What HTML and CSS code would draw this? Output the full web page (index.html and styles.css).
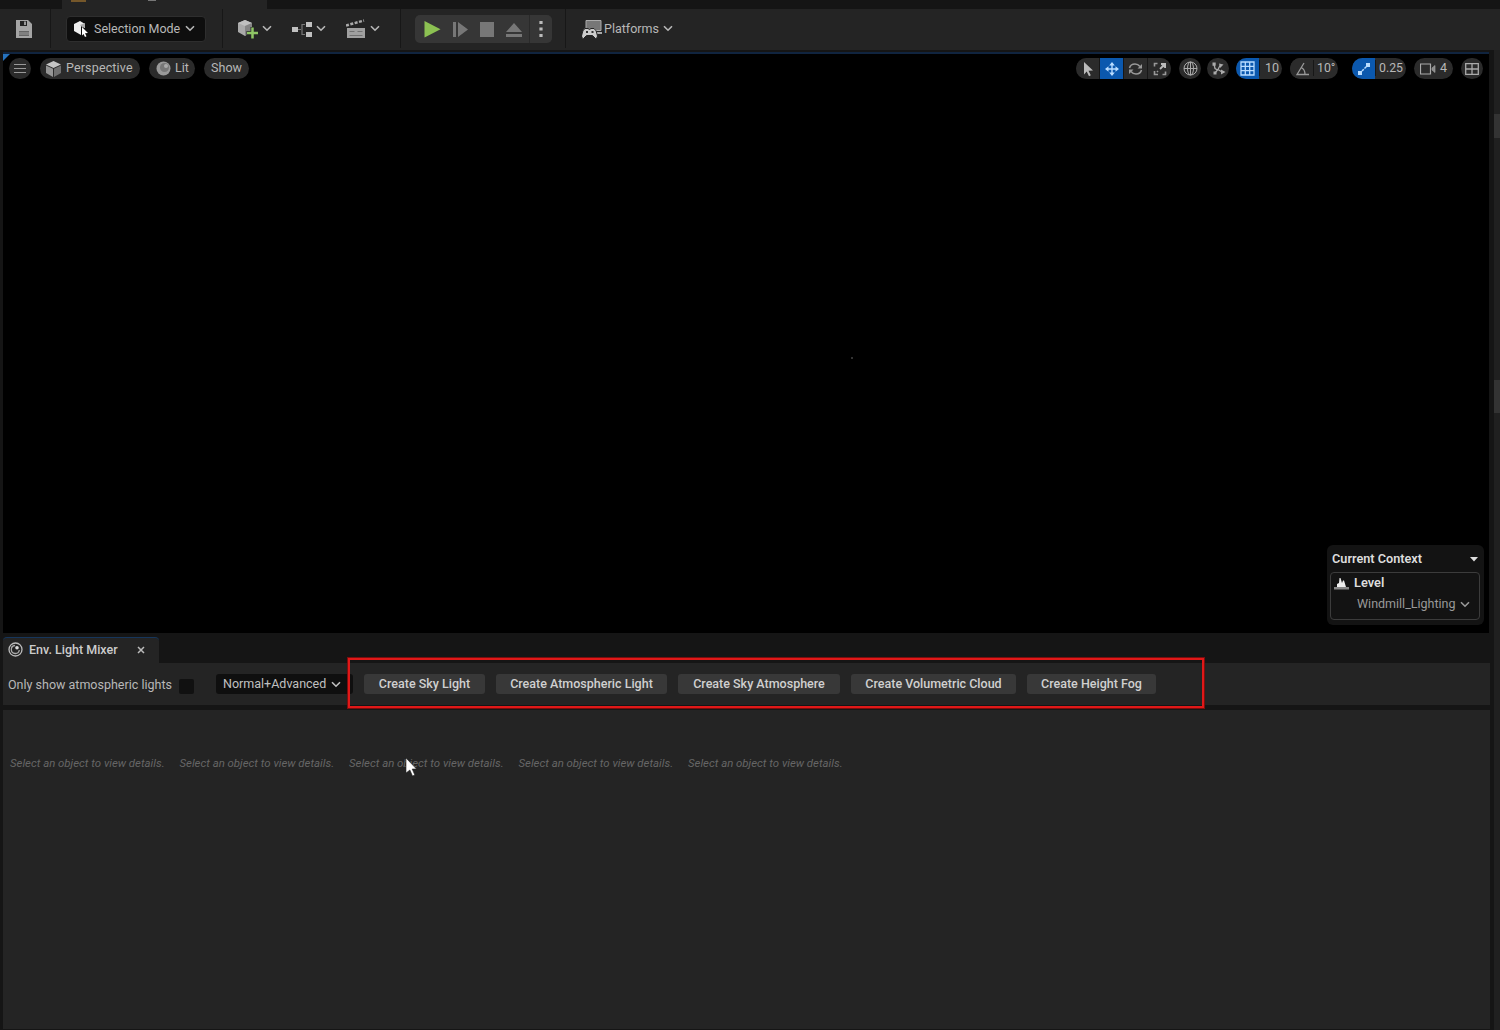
FILE: index.html
```
<!DOCTYPE html>
<html lang="en">
<head>
    <meta charset="UTF-8">
    <title>Env. Light Mixer</title>
    <link rel="stylesheet" href="styles.css">
</head>
<body class="page">
<svg class="defs">
    <symbol id="chevron" viewBox="0 0 10 7"><path d="M1 1.2l4 4 4-4" fill="none" stroke="currentColor" stroke-width="1.6"/></symbol>
</svg>
<div class="editor">
    <div class="main">
        <div class="top-tabs">
            <div class="top-tab"><span class="top-tab-icon"></span><span class="top-tab-mark"></span></div>
        </div>

        <div class="toolbar">
            <div class="tool-group save">
                <svg width="18" height="18" viewBox="0 0 18 18"><path fill="#a5a5a5" fill-rule="evenodd" d="M1 0h12l4 4v6H1zM5 1v5h7V1z"/><path fill="#999" d="M9 1.500h2v3.500H9z"/><path fill="#a5a5a5" fill-rule="evenodd" d="M1 10h16v8H1zM4 11.500v4h10v-4z"/><path fill="#808080" d="M4 12h10v3H4z"/></svg>
            </div>
            <div class="tool-group mode-group">
                <div class="mode">
                    <svg width="17" height="18" viewBox="0 0 17 18"><path fill="#eee" d="M1 4l6-3 5 3v4L8 6v9L1 11z"/><path fill="#aaa" d="M7 5l5-2v5L8 6z"/><path fill="#fff" d="M9 7l6 6-3 .2 1.500 3-1.500.8-1.500-3L9 15.500z"/></svg>
                    <span class="mode-name">Selection Mode</span>
                    <svg class="chevron"><use href="#chevron"/></svg>
                </div>
            </div>
            <div class="tool-group add-group">
                <div class="tool">
                    <svg width="20" height="20" viewBox="0 0 20 20"><path fill="#aaa" d="M0 4l7-3 7 3v8l-7 5-7-4z"/><path fill="#c0c0c0" d="M0 4l7-3 7 3-7 3z"/><path fill="#858585" d="M7 7l7-3v8l-7 5z"/><path stroke="#242424" stroke-width="4" d="M14.500 8v12M8.500 14h12"/><path stroke="#8fc565" stroke-width="2.500" d="M14.500 8.500v11M9 14h11"/></svg>
                    <svg class="chevron"><use href="#chevron"/></svg>
                </div>
                <div class="tool">
                    <svg width="20" height="20" viewBox="0 0 20 20"><path fill="#c0c0c0" d="M0 8h6v5H0zM14 3h6v5h-6zM14 13h6v5h-6z"/><path d="M6 10.500h3M13 5.500h-3v10h3" fill="none" stroke="#777" stroke-width="1.200"/></svg>
                    <svg class="chevron"><use href="#chevron"/></svg>
                </div>
                <div class="tool">
                    <svg width="20" height="20" viewBox="0 0 20 20"><path fill="#a0a0a0" d="M1 9h18v10H1z"/><path stroke="#707070" d="M3.500 12.500h5M11.500 12.500h5M3.500 16.500h13"/><path d="M0 6.500l18-5" stroke="#aaa" stroke-width="2.500" stroke-dasharray="3 1.500"/></svg>
                    <svg class="chevron"><use href="#chevron"/></svg>
                </div>
            </div>
            <div class="tool-group play-group">
                <div class="play-box">
                    <svg width="114" height="28" viewBox="0 0 114 28"><path fill="#8cc152" d="M9.500 6v16.500l16-8.200z"/><path fill="#777" d="M38 7h3v15h-3zM43 7v15l10-7.500zM65 7h14v15H65zM91 17l8-9 8 9zM91 19h16v3H91z"/></svg>
                    <div class="play-more">
                        <svg width="4" height="18" viewBox="0 0 4 18"><path fill="#bbb" d="M.4 1h3.200v3H.4zM.4 7.500h3.200v3H.4zM.4 14h3.200v3H.4z"/></svg>
                    </div>
                </div>
            </div>
            <div class="platforms">
                <svg width="20" height="20" viewBox="0 0 20 20"><path fill="#777" stroke="#aaa" d="M4 1.500h15v10H4z"/><path fill="#aaa" d="M14 13h6v2h-6z"/><path fill="#ccc" stroke="#242424" d="M3 9.500h3l1.500 1 1.500-1h3q2.500 1 3.500 7.500 0 2.500-2 2.500l-3-3h-6l-3 3q-2 0-2-2.500 1-6.500 3.500-7.500z"/><path fill="#333" d="M4 12h2v2H4zM9.500 12h2v2h-2z"/></svg>
                <span class="platforms-name">Platforms</span>
                <svg class="chevron"><use href="#chevron"/></svg>
            </div>
        </div>

        <div class="viewport">
            <span class="corner"></span>
            <span class="speck"></span>
            <div class="viewport-bar">
                <div class="pill round"><svg width="12" height="11" viewBox="0 0 12 11"><path stroke="#999" d="M0 1.500h12M0 5.500h12M0 9.500h12"/></svg></div>
                <div class="pill perspective">
                    <svg width="15" height="16" viewBox="0 0 15 16"><path fill="#c5c5c5" d="M0 3.500L7.500 0 15 3.500 7.500 7z"/><path fill="#959595" d="M0 4.500l7 3.300V16l-7-4z"/><path fill="#707070" d="M15 4.500L8 7.800V16l7-4z"/></svg>
                    <span>Perspective</span>
                </div>
                <div class="pill lit">
                    <svg width="15" height="15" viewBox="0 0 15 15"><circle cx="7.500" cy="7.500" r="7" fill="#999"/><circle cx="8.500" cy="6.500" r="4.500" fill="#777"/><circle cx="10" cy="5" r="2" fill="#aaa"/></svg>
                    <span>Lit</span>
                </div>
                <div class="pill show"><span>Show</span></div>

                <div class="pill transform">
                    <span class="cell"><svg width="14" height="16" viewBox="0 0 14 16"><path fill="#bbb" d="M3 1l9 8.500-4.500.3 2.300 4.500-1.800.9-2.300-4.600L3 13.500z"/></svg></span>
                    <span class="cell on"><svg width="14" height="14" viewBox="0 0 14 14"><path fill="#b9dcff" d="M7 0l2.800 3.500H4.200zM7 14l2.800-3.500H4.200zM0 7l3.500-2.800v5.600zM14 7l-3.500-2.800v5.600z"/><path stroke="#b9dcff" stroke-width="1.400" d="M7 2v10M2 7h10"/></svg></span>
                    <span class="cell"><svg width="15" height="14" viewBox="0 0 15 14"><path d="M1.500 6q1-4 5.500-4 3 0 5 2.500M13.500 8q-1 4-5.500 4-3 0-5-2.500" fill="none" stroke="#999" stroke-width="1.500"/><path fill="#999" d="M14 2v4.500H9.500zM1 12V7.500h4.500z"/></svg></span>
                    <span class="cell"><svg width="14" height="14" viewBox="0 0 14 14"><path fill="#bbb" d="M8 1h5v5h-1.500L8 2.500z"/><path d="M10.500 3.500L7 7" stroke="#bbb" stroke-width="1.800"/><path d="M1.500 9v3.500H5M4.500 1.500h-3v3M12.500 9.500v3h-3M4 10l1-1" fill="none" stroke="#999" stroke-width="1.600"/></svg></span>
                </div>
                <div class="pill round globe"><svg width="15" height="15" viewBox="0 0 15 15"><g fill="none" stroke="#aaa"><circle cx="7.500" cy="7.500" r="6.500"/><ellipse cx="7.500" cy="7.500" rx="3" ry="6.500"/><path d="M1 7.500h13M7.500 1v13"/></g></svg></div>
                <div class="pill round"><svg width="15" height="15" viewBox="0 0 15 15"><path d="M3 3l1 4.500L6.500 9M4 12l3-3.500 2-4M7 8.500l4 2.500" fill="none" stroke="#aaa" stroke-width="1.300"/><path fill="#aaa" d="M1.500 1.500h3.200v3.200H1.500zM8 2.500l4.500 1L9 7zM2.500 10.500h3v3h-3zM10 8.500l4.500 2.500-4.500 2.500z"/></svg></div>
                <div class="pill snap grid">
                    <span class="cell on"><svg width="15" height="15" viewBox="0 0 15 15"><path d="M1 1h13v13H1zM5.300 1v13M9.700 1v13M1 5.300h13M1 9.700h13" fill="none" stroke="#b9dcff" stroke-width="1.300"/></svg></span>
                    <span class="value">10</span>
                </div>
                <div class="pill snap angle">
                    <span class="cell"><svg width="14" height="14" viewBox="0 0 14 14"><path d="M9 1L2 12.500h12M6 5.500q4 1.500 4 7" fill="none" stroke="#999" stroke-width="1.300"/></svg></span>
                    <span class="value tight">10°</span>
                </div>
                <div class="pill snap scale">
                    <span class="cell on"><svg width="14" height="14" viewBox="0 0 14 14"><path fill="#b9dcff" d="M1 9h4v4H1zM9 1h4v4H9z"/><path d="M5 9l5-5" stroke="#b9dcff" stroke-width="1.500" stroke-dasharray="2.500 1"/></svg></span>
                    <span class="value tight">0.25</span>
                </div>
                <div class="pill camera">
                    <svg width="16" height="12" viewBox="0 0 16 12"><path d="M.5 1h10v10H.5z" fill="none" stroke="#aaa" stroke-width="1.200"/><path d="M12 5l3-2.500v7L12 7z" fill="#888" stroke="#aaa" stroke-width=".6"/></svg>
                    <span>4</span>
                </div>
                <div class="pill round"><svg width="14" height="12" viewBox="0 0 14 12"><path d="M.7.700h12.600v10.600H.7zM7 .7v10.600M.7 6h12.600" fill="none" stroke="#aaa" stroke-width="1.300"/></svg></div>
            </div>

            <div class="context">
                <div class="context-head"><span>Current Context</span><svg width="8" height="5" viewBox="0 0 8 5"><path fill="#ddd" d="M0 0h8L4 4.500z"/></svg></div>
                <div class="context-box">
                    <div class="context-level">
                        <svg width="15" height="13" viewBox="0 0 15 13"><path fill="#eee" d="M3 10V7l2-1 .5-5h1L8 6l1-2.500h1L12 10z"/><path fill="#888" d="M0 10h15v2.500H0z"/></svg>
                        <span>Level</span>
                    </div>
                    <div class="context-name"><span>Windmill_Lighting</span><svg class="chevron"><use href="#chevron"/></svg></div>
                </div>
            </div>
        </div>

        <div class="mixer">
            <div class="mixer-tabs">
                <div class="mixer-tab">
                    <svg width="15" height="15" viewBox="0 0 15 15"><circle cx="7.500" cy="7.500" r="6.500" fill="none" stroke="#bbb" stroke-width="1.300"/><path d="M7 3.500a4 4 0 1 0 4.300 4.500" fill="none" stroke="#aaa" stroke-width="1.300"/><circle cx="9" cy="5.800" r="1.800" fill="#ddd"/></svg>
                    <span class="mixer-title">Env. Light Mixer</span>
                    <svg width="8" height="8" viewBox="0 0 8 8"><path d="M1 1l6 6M7 1L1 7" stroke="#bbb" stroke-width="1.500"/></svg>
                </div>
            </div>
            <div class="mixer-bar">
                <span class="only-show">Only show atmospheric lights</span>
                <span class="checkbox"></span>
                <div class="detail-mode"><span>Normal+Advanced</span><svg class="chevron"><use href="#chevron"/></svg></div>
                <div class="create-buttons">
                    <button class="create sky-light">Create Sky Light</button>
                    <button class="create atmospheric">Create Atmospheric Light</button>
                    <button class="create sky-atmosphere">Create Sky Atmosphere</button>
                    <button class="create cloud">Create Volumetric Cloud</button>
                    <button class="create fog">Create Height Fog</button>
                </div>
                <span class="highlight"></span>
            </div>
            <div class="details">
                <span class="detail">Select an object to view details.</span>
                <span class="detail">Select an object to view details.</span>
                <span class="detail">Select an object to view details.</span>
                <span class="detail">Select an object to view details.</span>
                <span class="detail">Select an object to view details.</span>
                <svg class="pointer" width="13" height="20" viewBox="0 0 13 20"><path fill="#fff" stroke="#222" stroke-width=".6" d="M1 1l10.500 11H7.200l2.600 6-2.300 1-2.600-6L1 16z"/></svg>
            </div>
        </div>
    </div>
    <div class="side">
        <span class="side-block first"></span>
        <span class="side-block second"></span>
    </div>
</div>
</body>
</html>
```
FILE: styles.css
```
* {
    box-sizing: border-box;
}

.page {
    margin: 0;
    background: #151515;
    color: #b8b8b8;
    font: 12.5px/16px Roboto, "Liberation Sans", sans-serif;
    overflow: hidden;
}

.page svg {
    display: block;
    flex: none;
}

.page .defs {
    position: absolute;
    width: 0;
    height: 0;
}

.page .chevron {
    width: 10px;
    height: 7px;
}

.editor {
    display: flex;
    height: 1030px;
}

.main {
    width: 1494px;
    display: flex;
    flex-direction: column;
}

/* level tabs, mostly scrolled above the window */
.top-tabs {
    height: 9px;
    padding-left: 62px;
}

.top-tab {
    display: flex;
    width: 205px;
    height: 9px;
    padding-left: 9px;
    background: #242424;
}

.top-tab-icon {
    width: 15px;
    height: 2px;
    background: #75572a;
}

.top-tab-mark {
    width: 8px;
    height: 1px;
    margin-left: 62px;
    background: #777;
}

/* toolbar */
.toolbar {
    display: flex;
    height: 41px;
    width: 1500px;
    background: #242424;
}

.tool-group {
    display: flex;
    align-items: center;
    height: 39px;
    border-right: 1px solid #171717;
}

.save {
    width: 51px;
    padding-left: 15px;
}

.mode-group {
    width: 172px;
    padding-left: 15px;
}

.mode {
    display: flex;
    align-items: center;
    width: 140px;
    height: 26px;
    padding-left: 6px;
    border: 1px solid #2e2e2e;
    border-radius: 4px;
    background: #0e0e0e;
}

.mode-name {
    width: 91px;
    margin-left: 4px;
    white-space: nowrap;
}

.add-group {
    width: 178px;
    padding-left: 15px;
    gap: 20px;
}

.tool {
    display: flex;
    align-items: center;
    gap: 4px;
}

.play-group {
    width: 165px;
    padding-left: 14px;
}

.play-box {
    display: flex;
    width: 137px;
    height: 28px;
    border-radius: 5px;
    background: #363636;
}

.play-more {
    display: flex;
    align-items: center;
    width: 23px;
    padding-left: 9px;
    border-left: 1px solid #2a2a2a;
}

.platforms {
    display: flex;
    align-items: center;
    height: 39px;
    padding-left: 16px;
}

.platforms-name {
    width: 59px;
    margin-left: 2px;
}

/* viewport */
.viewport {
    position: relative;
    display: flex;
    flex-direction: column;
    justify-content: space-between;
    width: 1486px;
    height: 581px;
    margin: 2px 0 0 3px;
    border-top: 2px solid #10243f;
    background: #000;
}

.corner {
    position: absolute;
    left: 0;
    top: 0;
    border-top: 7px solid #2672bd;
    border-right: 7px solid transparent;
}

.speck {
    position: absolute;
    left: 848px;
    top: 303px;
    width: 2px;
    height: 2px;
    background: #333;
}

.viewport-bar {
    display: flex;
    padding: 4px 0 0 6px;
}

.pill {
    display: flex;
    align-items: center;
    height: 21px;
    border-radius: 11px;
    background: #2b2b2b;
    overflow: hidden;
}

.pill > span {
    margin-top: -1px;
}

.round {
    justify-content: center;
    width: 22px;
    margin-right: 6px;
}

.perspective {
    width: 100px;
    margin: 0 9px 0 3px;
    padding-left: 6px;
    gap: 5px;
    letter-spacing: .15px;
}

.lit {
    width: 46px;
    margin-right: 9px;
    padding-left: 7px;
    gap: 4px;
}

.show {
    justify-content: center;
    width: 45px;
}

.transform {
    width: 95px;
    margin: 0 8px 0 auto;
    gap: 1px;
    background: #171717;
}

.pill > .cell {
    display: flex;
    align-items: center;
    justify-content: center;
    width: 23px;
    height: 21px;
    margin: 0;
    background: #2b2b2b;
}

.pill > .on {
    background: #0b58ae;
}

.value {
    flex: 1;
    padding-left: 5px;
    border-left: 1px solid #171717;
}

.tight {
    padding-left: 3px;
    font-size: 12.3px;
}

.grid {
    width: 46px;
    margin-left: 1px;
}

.angle {
    width: 48px;
    margin-left: 8px;
}

.scale {
    width: 54px;
    margin-left: 14px;
}

.camera {
    width: 39px;
    margin: 0 8px 0 8px;
    padding-left: 6px;
    gap: 4px;
}

.context {
    width: 157px;
    height: 80px;
    margin: 0 5px 8px auto;
    padding: 6px 4px 0 3px;
    border-radius: 6px;
    background: #131313;
    color: #ddd;
    font-weight: 500;
}

.context-head {
    display: flex;
    align-items: center;
    justify-content: space-between;
    height: 16px;
    padding: 0 2px;
    font-size: 12.7px;
    font-weight: 600;
}

.context-box {
    height: 48px;
    margin-top: 5px;
    padding: 2px 3px;
    border: 1px solid #3c3c3c;
    border-radius: 4px;
}

.context-level {
    display: flex;
    align-items: center;
    gap: 5px;
    font-size: 12.8px;
    font-weight: 600;
}

.context-name {
    display: flex;
    align-items: center;
    justify-content: space-between;
    margin-top: 5px;
    padding: 0 6px 0 23px;
    color: #999;
    font-weight: 400;
}

/* light mixer */
.mixer {
    width: 1487px;
    margin: 4px 0 0 3px;
}

.mixer-tabs {
    height: 26px;
}

.mixer-tab {
    display: flex;
    align-items: center;
    width: 156px;
    height: 26px;
    padding: 0 0 2px 5px;
    border-top: 1px solid #16365c;
    border-radius: 4px 4px 0 0;
    background: #242424;
    color: #ccc;
    font-weight: 500;
}

.mixer-title {
    width: 108px;
    margin-left: 6px;
}

.mixer-bar {
    position: relative;
    display: flex;
    align-items: center;
    height: 42px;
    padding-left: 5px;
    background: #242424;
}

.only-show {
    width: 171px;
    margin-top: 2px;
    white-space: nowrap;
}

.checkbox {
    width: 15px;
    height: 15px;
    margin-top: 4px;
    border-radius: 2px;
    background: #111;
}

.detail-mode {
    display: flex;
    align-items: center;
    width: 137px;
    height: 20px;
    margin: 0 11px 0 22px;
    padding-left: 7px;
    gap: 5px;
    border-radius: 3px;
    background: #0f0f0f;
    color: #c0c0c0;
}

.create-buttons {
    display: flex;
    gap: 11px;
}

.create {
    height: 20px;
    padding: 0;
    border: 0;
    border-radius: 3px;
    background: #383838;
    color: #d0d0d0;
    font: 500 12.5px/20px Roboto, "Liberation Sans", sans-serif;
}

.sky-light {
    width: 121px;
}

.atmospheric {
    width: 171px;
}

.sky-atmosphere {
    width: 162px;
}

.cloud {
    width: 165px;
}

.fog {
    width: 129px;
}

.highlight {
    position: absolute;
    left: 345px;
    top: -5px;
    width: 856px;
    height: 50px;
    border: 2px solid #e01818;
    outline: 1px solid #7a0e0e;
}

.details {
    position: relative;
    display: flex;
    height: 319px;
    margin-top: 5px;
    padding: 45px 0 0 7px;
    background: #242424;
}

.detail {
    width: 169.500px;
    color: #666;
    font-size: 11.400px;
    font-style: italic;
    white-space: nowrap;
}

.pointer {
    position: absolute;
    left: 402px;
    top: 47px;
}

/* neighbouring panel edge */
.side {
    display: flex;
    flex-direction: column;
    width: 6px;
    margin-top: 50px;
    background: #202020;
}

.side-block {
    background: #333;
}

.first {
    height: 24px;
    margin-top: 64px;
}

.second {
    height: 33px;
    margin-top: 242px;
}
```
